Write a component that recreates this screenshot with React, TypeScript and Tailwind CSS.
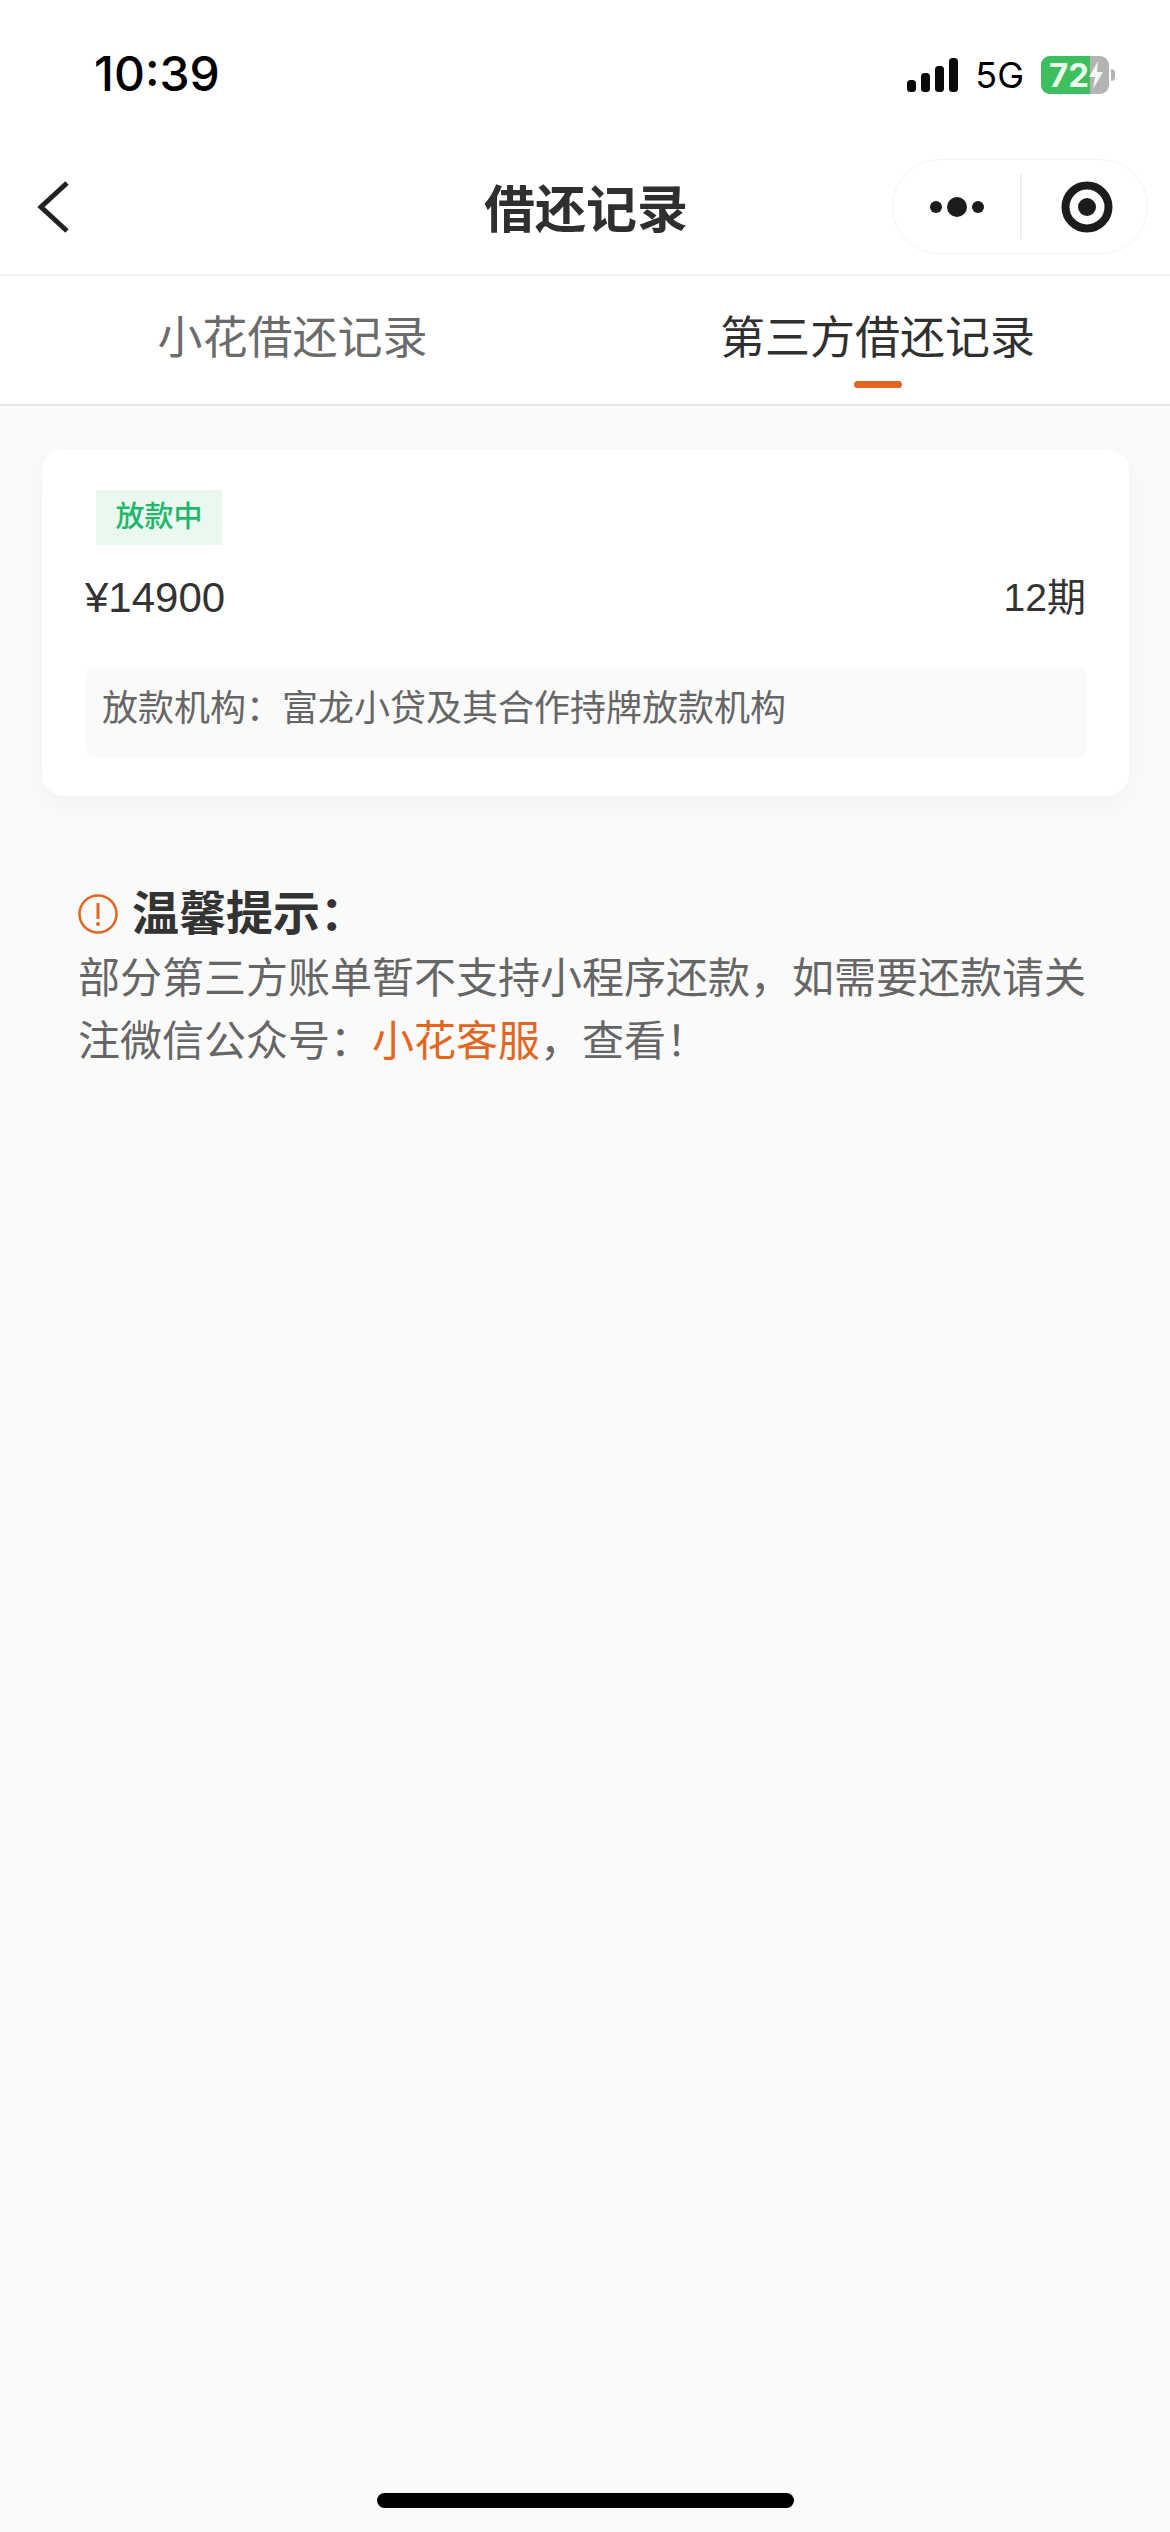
const font = "font-['Liberation_Sans','Noto_Sans_CJK_SC',sans-serif]"

function StatusBar() {
  return (
    <div className="flex h-[150px] items-start justify-between pt-[49px] pr-[55px] pl-[94px]">
      <span className="font-['Inter',sans-serif] text-[48px] leading-[50px] font-medium text-black">10:39</span>
      <div className="mt-[6px] flex items-center">
        <svg width="51" height="34" viewBox="0 0 51 34" fill="#0a0a0a">
          <rect x="0" y="22" width="9" height="12" rx="3.5" />
          <rect x="14" y="15" width="9" height="19" rx="3.5" />
          <rect x="28" y="8" width="9" height="26" rx="3.5" />
          <rect x="42" y="0" width="9" height="34" rx="3.5" />
        </svg>
        <span className="ml-[17px] font-['Inter',sans-serif] text-[36px] leading-[40px] text-black">5G</span>
        <div className="relative ml-[17px] flex h-[38px] w-[68px] overflow-hidden rounded-[9px] bg-[#b3b3b3]">
          <div className="h-full w-[49px] bg-[#3dbf5f]" />
          <span className="absolute top-0 left-[8px] font-['Inter',sans-serif] text-[33px] leading-[38px] font-bold text-[#eafbea]">72</span>
          <svg className="absolute top-[5px] left-[47px]" width="16" height="28" viewBox="0 0 16 28" fill="#f2f7f2">
            <path d="M10 0 L1 16 H7 L5 28 L15 11 H9 Z" />
          </svg>
        </div>
        <div className="ml-[2px] h-[12px] w-[4px] rounded-r-full bg-[#b3b3b3]" />
      </div>
    </div>
  )
}

function NavBar() {
  return (
    <div className="relative flex h-[126px] items-center justify-center border-b-2 border-[#efefef]">
      <svg className="absolute top-[31px] left-[36px]" width="34" height="52" viewBox="0 0 34 52" fill="none" stroke="#222222" strokeWidth="5">
        <path d="M31 2 L5 26 L31 50" />
      </svg>
      <h1 className="mb-[2px] ml-[2px] text-[51px] leading-[60px] font-semibold text-[#2f2f2f]">借还记录</h1>
      <div className="absolute top-[9px] left-[892px] flex h-[95px] w-[256px] items-center rounded-full border border-[#f2f2f2] bg-white">
        <div className="flex w-[127px] items-center justify-center gap-[5px]">
          <span className="size-[12px] rounded-full bg-[#1c1c1c]" />
          <span className="size-[20px] rounded-full bg-[#1c1c1c]" />
          <span className="size-[12px] rounded-full bg-[#1c1c1c]" />
        </div>
        <div className="h-[65px] w-[2px] bg-[#eeeeee]" />
        <div className="flex flex-1 items-center justify-center pl-[4px]">
          <svg width="52" height="52" viewBox="0 0 52 52">
            <circle cx="26" cy="26" r="21.5" fill="none" stroke="#1c1c1c" strokeWidth="8" />
            <circle cx="26" cy="26" r="9" fill="#1c1c1c" />
          </svg>
        </div>
      </div>
    </div>
  )
}

function Tabs() {
  return (
    <div className="flex h-[130px] border-b-2 border-[#e6e6e6] bg-white">
      <div className="flex w-[585px] justify-center pt-[33px]">
        <span className="text-[45px] leading-[60px] text-[#6b6b6b]">小花借还记录</span>
      </div>
      <div className="flex flex-1 flex-col items-center pt-[33px]">
        <span className="text-[45px] leading-[60px] text-[#303030]">第三方借还记录</span>
        <div className="mt-[12px] h-[7px] w-[48px] rounded-full bg-[#e2661f]" />
      </div>
    </div>
  )
}

function LoanCard() {
  return (
    <div className="mt-[43px] mr-[41px] ml-[42px] h-[347px] rounded-[22px] bg-white pt-[41px] pr-[42px] pl-[43px] shadow-[0_8px_24px_rgba(0,0,0,0.035)]">
      <span className="ml-[11px] flex h-[55px] w-[126px] items-center justify-center bg-[#e9f9f0] text-[29px] font-medium text-[#1fb76a]">放款中</span>
      <div className="mt-[28px] flex items-center justify-between pr-[1px] text-[42px] leading-[50px] text-[#333333]">
        <span>¥14900</span>
        <span className="text-[39px]">12期</span>
      </div>
      <div className="mt-[44px] h-[91px] rounded-[10px] bg-[#fafafa] pt-[17px] pl-[17px] text-[36px] leading-[50px] text-[#666666]">
        放款机构&#xFF1A;富龙小贷及其合作持牌放款机构
      </div>
    </div>
  )
}

function Notice() {
  return (
    <div className="mt-[88px] pr-[80px] pl-[78px]">
      <div className="flex items-center">
        <svg width="40" height="40" viewBox="0 0 40 40" fill="none">
          <circle cx="20" cy="20" r="18.5" stroke="#e2661f" strokeWidth="2.5" />
          <path d="M20 9 V25" stroke="#e2661f" strokeWidth="3" />
          <circle cx="20" cy="30" r="2" fill="#e2661f" />
        </svg>
        <h2 className="ml-[14px] text-[47px] leading-[60px] font-semibold text-[#333333]">温馨提示&#xFF1A;</h2>
      </div>
      <p className="mt-[3px] text-[42px] leading-[63px] text-[#666666]">
        部分第三方账单暂不支持小程序还款&#xFF0C;如需要还款请关注微信公众号&#xFF1A;<span className="text-[#e2661f]">小花客服</span>&#xFF0C;查看&#xFF01;
      </p>
    </div>
  )
}

export default function App() {
  return (
    <div className={`flex min-h-[2532px] flex-col bg-[#fafafa] ${font}`}>
      <div className="bg-white">
        <StatusBar />
        <NavBar />
        <Tabs />
      </div>
      <LoanCard />
      <Notice />
      <div className="mt-auto mb-[24px] h-[15px] w-[417px] self-center rounded-full bg-black" />
    </div>
  )
}
